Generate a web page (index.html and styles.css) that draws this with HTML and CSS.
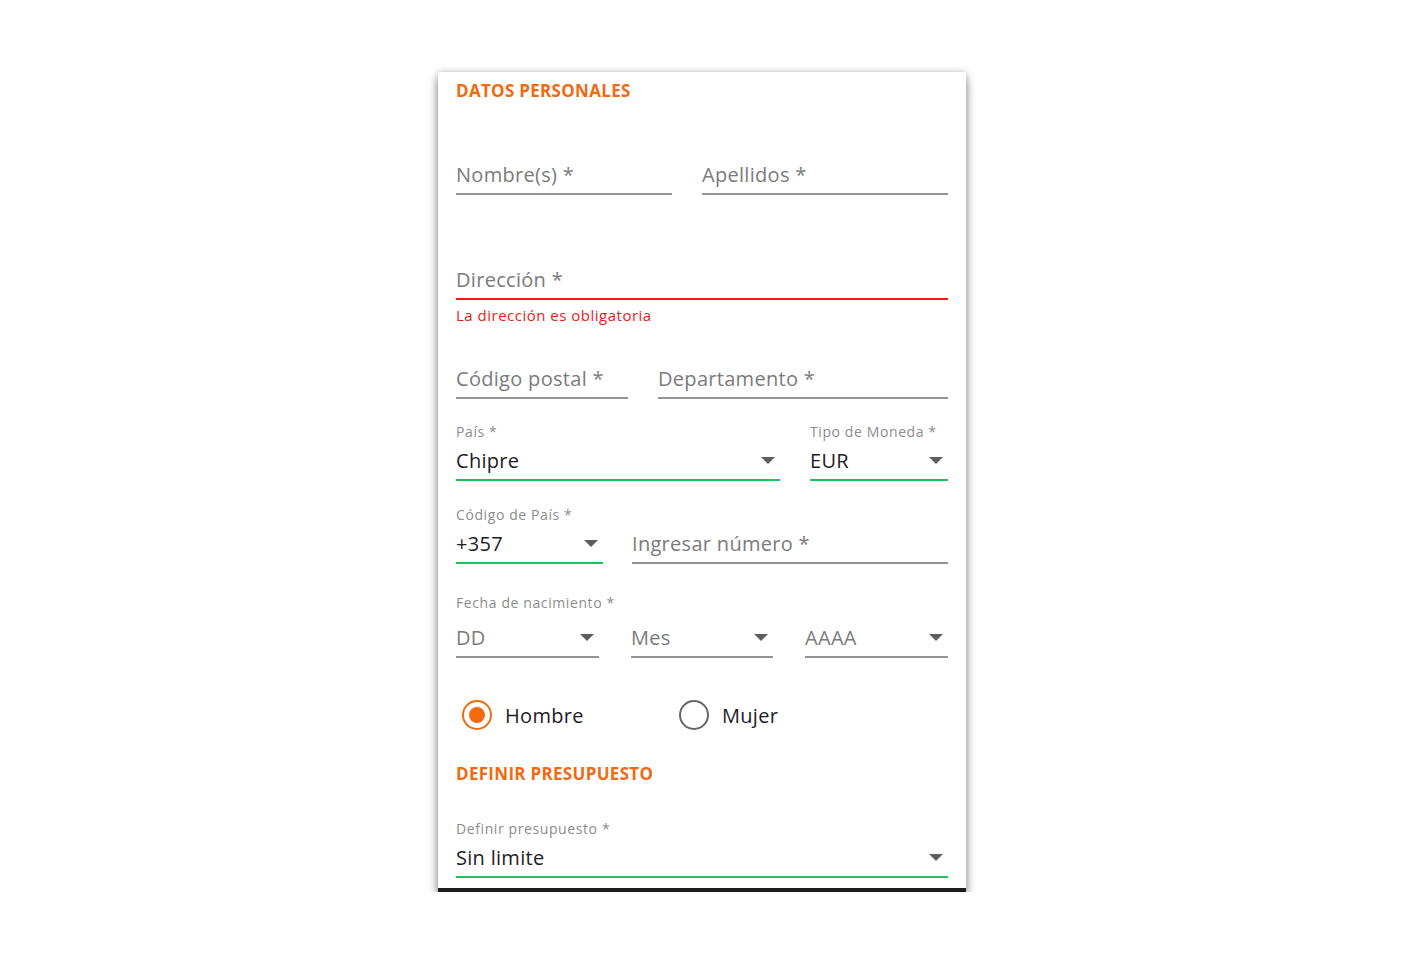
FILE: index.html
```html
<!DOCTYPE html>
<html lang="es">
<head>
  <meta charset="UTF-8">
  <meta name="viewport" content="width=device-width, initial-scale=1.0">
  <title>Datos personales</title>
  <link rel="stylesheet" href="styles.css">
</head>
<body>
  <form class="card">
    <h2 class="section-title">DATOS PERSONALES</h2>

    <div class="row row-names">
      <div class="field w-nombre"><span class="placeholder">Nombre(s) *</span></div>
      <div class="field grow"><span class="placeholder">Apellidos *</span></div>
    </div>

    <div class="row row-address">
      <div class="field grow error"><span class="placeholder">Dirección *</span></div>
    </div>
    <p class="error-text">La dirección es obligatoria</p>

    <div class="row row-postal">
      <div class="field w-postal"><span class="placeholder">Código postal *</span></div>
      <div class="field grow"><span class="placeholder">Departamento *</span></div>
    </div>

    <div class="row row-country">
      <div class="group w-pais">
        <label class="small-label">País *</label>
        <div class="field select filled"><span class="value">Chipre</span><span class="arrow"></span></div>
      </div>
      <div class="group grow">
        <label class="small-label">Tipo de Moneda *</label>
        <div class="field select filled"><span class="value">EUR</span><span class="arrow"></span></div>
      </div>
    </div>

    <div class="row row-phone">
      <div class="group w-code">
        <label class="small-label">Código de País *</label>
        <div class="field select filled"><span class="value">+357</span><span class="arrow"></span></div>
      </div>
      <div class="group grow">
        <label class="small-label">&nbsp;</label>
        <div class="field"><span class="placeholder">Ingresar número *</span></div>
      </div>
    </div>

    <div class="birth">
      <label class="small-label">Fecha de nacimiento *</label>
      <div class="row date-row">
        <div class="field select w-dd"><span class="placeholder">DD</span><span class="arrow"></span></div>
        <div class="field select w-mes"><span class="placeholder">Mes</span><span class="arrow"></span></div>
        <div class="field select grow"><span class="placeholder">AAAA</span><span class="arrow"></span></div>
      </div>
    </div>

    <div class="radios">
      <label class="radio checked"><span class="circle"></span>Hombre</label>
      <label class="radio"><span class="circle"></span>Mujer</label>
    </div>

    <h2 class="section-title second">DEFINIR PRESUPUESTO</h2>

    <div class="group budget">
      <label class="small-label">Definir presupuesto *</label>
      <div class="field select filled"><span class="value">Sin limite</span><span class="arrow"></span></div>
    </div>
  </form>
</body>
</html>
```
FILE: styles.css
```css
body {
  margin: 0;
  background: #fff;
  font-family: "Open Sans", "Noto Sans", sans-serif;
}
.card {
  width: 492px;
  margin: 72px auto 0;
  padding: 9px 18px 10px 18px;
  background: #fff;
  border-bottom: 4px solid #1d1d1d;
  box-shadow: 0 7px 10px rgba(0, 0, 0, 0.4), 0 0 7px rgba(0, 0, 0, 0.22);
}
.section-title {
  margin: 0;
  font-size: 17px;
  line-height: 20px;
  font-weight: 700;
  color: #f26a10;
  letter-spacing: 0.3px;
}
.section-title.second {
  margin-top: 33px;
}
.row {
  display: flex;
  gap: 30px;
}
.grow {
  flex: 1;
}
.field {
  display: flex;
  align-items: center;
  justify-content: space-between;
  height: 24px;
  padding-bottom: 7px;
  border-bottom: 2px solid #939393;
  font-size: 20px;
  letter-spacing: 0.3px;
}
.field.error {
  border-bottom-color: #f21b1b;
}
.field.filled {
  border-bottom-color: #22c05b;
}
.placeholder {
  color: #7b7b7b;
}
.value {
  color: #1c1c28;
}
.arrow {
  width: 0;
  height: 0;
  margin-right: 5px;
  border-left: 7px solid transparent;
  border-right: 7px solid transparent;
  border-top: 7px solid #5e5e5e;
}
.small-label {
  display: block;
  height: 16px;
  margin-bottom: 8px;
  font-size: 14px;
  line-height: 16px;
  letter-spacing: 0.6px;
  color: #8c8c8c;
}
.row-names {
  margin-top: 61px;
}
.w-nombre {
  width: 216px;
}
.row-address {
  margin-top: 72px;
}
.error-text {
  margin: 6px 0 0;
  font-size: 15px;
  line-height: 18px;
  letter-spacing: 0.5px;
  color: #f01818;
}
.row-postal {
  margin-top: 42px;
}
.w-postal {
  width: 172px;
}
.row-country {
  margin-top: 25px;
}
.w-pais {
  width: 324px;
}
.row-phone {
  margin-top: 26px;
  gap: 29px;
}
.w-code {
  width: 147px;
}
.birth {
  margin-top: 31px;
}
.birth .small-label {
  margin-bottom: 14px;
}
.date-row {
  gap: 32px;
}
.w-dd {
  width: 143px;
}
.w-mes {
  width: 142px;
}
.radios {
  display: flex;
  margin-top: 41px;
  padding-left: 6px;
}
.radio {
  display: flex;
  align-items: center;
  gap: 13px;
  width: 217px;
  height: 32px;
  font-size: 20px;
  letter-spacing: 0.3px;
  color: #1c1c28;
}
.circle {
  box-sizing: border-box;
  width: 30px;
  height: 30px;
  border: 2px solid #666;
  border-radius: 50%;
  display: flex;
  align-items: center;
  justify-content: center;
}
.radio.checked .circle {
  border-color: #f26a10;
}
.radio.checked .circle::after {
  content: "";
  width: 16px;
  height: 16px;
  border-radius: 50%;
  background: #f26a10;
}
.budget {
  margin-top: 37px;
}
```
